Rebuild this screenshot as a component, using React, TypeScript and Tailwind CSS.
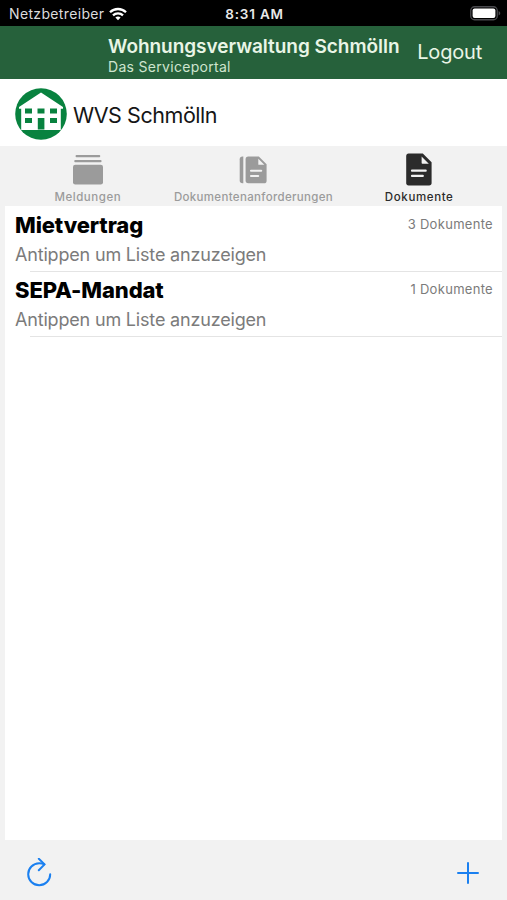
import type { ReactNode } from 'react';
import clsx from 'clsx';

type Tab = { label: string; icon: ReactNode; labelClass: string; active?: boolean };

const folders = [
  { title: 'Mietvertrag', count: 3 },
  { title: 'SEPA-Mandat', count: 1 },
];

function WifiIcon() {
  return (
    <svg width="18" height="14" viewBox="0 0 18 14" fill="none" stroke="#fff" strokeWidth="2.3">
      <path d="M1 5.2C5.4 0.9 12.6 0.9 17 5.2" />
      <path d="M4 8.3C6.8 5.6 11.2 5.6 14 8.3" />
      <path d="M9 13.2L6.4 10.5C7.9 9.2 10.1 9.2 11.6 10.5Z" fill="#fff" stroke="none" />
    </svg>
  );
}

function BatteryIcon() {
  return (
    <svg width="31" height="15" viewBox="0 0 31 15">
      <rect x="0.75" y="0.75" width="26.5" height="13" rx="3.8" fill="none" stroke="#4a4a4e" strokeWidth="1.3" />
      <rect x="2.6" y="2.6" width="22.8" height="9.3" rx="2" fill="#fff" />
      <path d="M28.6 5C30.8 5.8 30.8 8.7 28.6 9.5Z" fill="#4a4a4e" />
    </svg>
  );
}

function HouseLogo() {
  return (
    <svg width="52" height="52" viewBox="0 0 52 52">
      <circle cx="26" cy="26" r="25.8" fill="#08823f" />
      <path d="M26 4.5L48 19V20.8H45.8V42H6.2V20.8H4V19Z" fill="#fff" />
      <g fill="#08823f">
        <path d="M10 20.5h7v5h-7zM22.5 20.5h7v5h-7zM35 20.5h7v5h-7z" />
        <path d="M10 30h7v5h-7zM35 30h7v5h-7zM22.8 30h6.6v11.5h-6.6z" />
      </g>
    </svg>
  );
}

function StackIcon() {
  return (
    <svg width="30" height="30" viewBox="0 0 30 30" fill="currentColor">
      <rect x="2.6" y="0" width="24.6" height="2.3" rx="0.8" />
      <rect x="1.3" y="4.9" width="27.2" height="2.3" rx="0.8" />
      <rect x="0" y="9.7" width="30" height="19.8" rx="2.3" />
    </svg>
  );
}

function DocumentsIcon() {
  return (
    <svg width="28" height="28" viewBox="0 0 28 28" fill="currentColor">
      <path d="M4.3 0.5V27.3H3.5C1.7 27.3 0.7 26.3 0.7 24.5V3.3C0.7 1.5 1.7 0.5 3.5 0.5Z" />
      <path d="M9.3 0.5H19.8L27.6 8.2V24.7C27.6 26.5 26.6 27.3 25 27.3H9.3C7.5 27.3 6.6 26.3 6.6 24.6V3.2C6.6 1.5 7.5 0.5 9.3 0.5Z" />
      <path d="M19.3 2.8L25.3 8.8H19.3Z" fill="#f2f2f2" />
      <path d="M12 14.8H22.2M12 20H19.2" fill="none" stroke="#f2f2f2" strokeWidth="2.1" strokeLinecap="round" />
    </svg>
  );
}

function DocumentIcon() {
  return (
    <svg width="26" height="33" viewBox="0 0 26 33" fill="currentColor">
      <path d="M2.6 0.5H16.8L25.6 9.3V30C25.6 31.6 24.7 32.5 23.1 32.5H2.6C1 32.5 0.2 31.6 0.2 30V3C0.2 1.4 1 0.5 2.6 0.5Z" />
      <path d="M15.6 3.5L22.8 10.7H16.4Q15.6 10.7 15.6 9.9Z" fill="#f2f2f2" />
      <path d="M6 17.7H19.7M6 22.9H16.8" fill="none" stroke="#f2f2f2" strokeWidth="2.2" strokeLinecap="round" />
    </svg>
  );
}

const tabs: Tab[] = [
  { label: 'Meldungen', icon: <StackIcon />, labelClass: 'tracking-[0.55px]' },
  { label: 'Dokumentenanforderungen', icon: <DocumentsIcon />, labelClass: 'tracking-[0.33px]' },
  { label: 'Dokumente', icon: <DocumentIcon />, labelClass: 'tracking-[0.62px]', active: true },
];

export default function App() {
  return (
    <div className="flex h-[900px] w-[507px] flex-col overflow-hidden bg-[#f2f2f2] font-['Inter','Liberation_Sans',sans-serif]">
      <div className="grid h-[26px] shrink-0 grid-cols-3 items-center bg-black pt-0.5 pr-[6px] pl-[9px] text-white">
        <div className="flex items-center gap-[5px]">
          <span className="text-[14px] leading-4 tracking-[0.35px] text-[#dcdcdc]">Netzbetreiber</span>
          <WifiIcon />
        </div>
        <span className="pr-px text-center text-[13.5px] leading-4 font-semibold tracking-[0.8px] text-[#e8e8e8]">
          8:31 AM
        </span>
        <div className="flex justify-end pb-px">
          <BatteryIcon />
        </div>
      </div>

      <header className="flex h-[53px] shrink-0 justify-between bg-[#26613b] pr-[25px] pl-[108px] text-[#e9f5e6]">
        <div className="pt-[10px]">
          <h1 className="text-[19px] leading-[22px] font-semibold tracking-[-0.04px] whitespace-nowrap">
            Wohnungsverwaltung Schmölln
          </h1>
          <p className="text-[14px] leading-[18px] tracking-[0.3px] text-[#cfe5cf]">Das Serviceportal</p>
        </div>
        <button className="text-[20px] leading-[53px] tracking-[-0.2px]">Logout</button>
      </header>

      <div className="flex h-[67px] shrink-0 items-center gap-[6px] bg-white pt-[3px] pl-[15px]">
        <HouseLogo />
        <span className="pt-0.5 text-[21.5px] tracking-[-0.45px] text-[#151515]">WVS Schmölln</span>
      </div>

      <nav className="grid h-[60px] shrink-0 grid-cols-3 px-[5px]">
        {tabs.map((tab) => (
          <button
            key={tab.label}
            className={clsx('flex flex-col items-center', tab.active ? 'text-[#2b2b2b]' : 'text-[#9b9b9b]')}
          >
            <span className="flex h-[44px] items-center pt-[3px]">{tab.icon}</span>
            <span className={clsx('text-[11.5px] leading-[14px] font-medium whitespace-nowrap', tab.labelClass)}>
              {tab.label}
            </span>
          </button>
        ))}
      </nav>

      <main className="mx-[5px] flex-1 bg-white pt-px">
        <ul>
          {folders.map((folder) => (
            <li key={folder.title}>
              <div className="flex h-16 justify-between pr-[9px] pl-[10px]">
                <div className="pt-[4px]">
                  <h2 className="text-[22px] leading-[28px] font-extrabold tracking-[-0.12px] text-black">
                    {folder.title}
                  </h2>
                  <p className="text-[18px] leading-[32px] tracking-[-0.18px] text-[#7b7b7b]">
                    Antippen um Liste anzuzeigen
                  </p>
                </div>
                <span className="pt-[7px] text-[13px] leading-5 tracking-[0.3px] text-[#7b7b7b]">
                  {folder.count} Dokumente
                </span>
              </div>
              <div className="ml-[25px] h-px bg-[#e4e4e4]" />
            </li>
          ))}
        </ul>
      </main>

      <footer className="flex h-[60px] shrink-0 items-center justify-between pt-1.5 pr-[28px] pl-[27px]">
        <svg width="25" height="30" viewBox="0 0 25 30" fill="none" stroke="#1b80f0" strokeWidth="2" strokeLinecap="round" strokeLinejoin="round">
          <path d="M17.3 6.3C15.8 5.6 14 5.3 12.2 5.3A11 11 0 1 0 23.2 16.3" />
          <path d="M11.8 0.8L17.6 6.4L11.8 12.2" />
        </svg>
        <svg width="22" height="22" viewBox="0 0 22 22" fill="none" stroke="#1b80f0" strokeWidth="2" strokeLinecap="round">
          <path d="M11 1V21M1 11H21" />
        </svg>
      </footer>
    </div>
  );
}
